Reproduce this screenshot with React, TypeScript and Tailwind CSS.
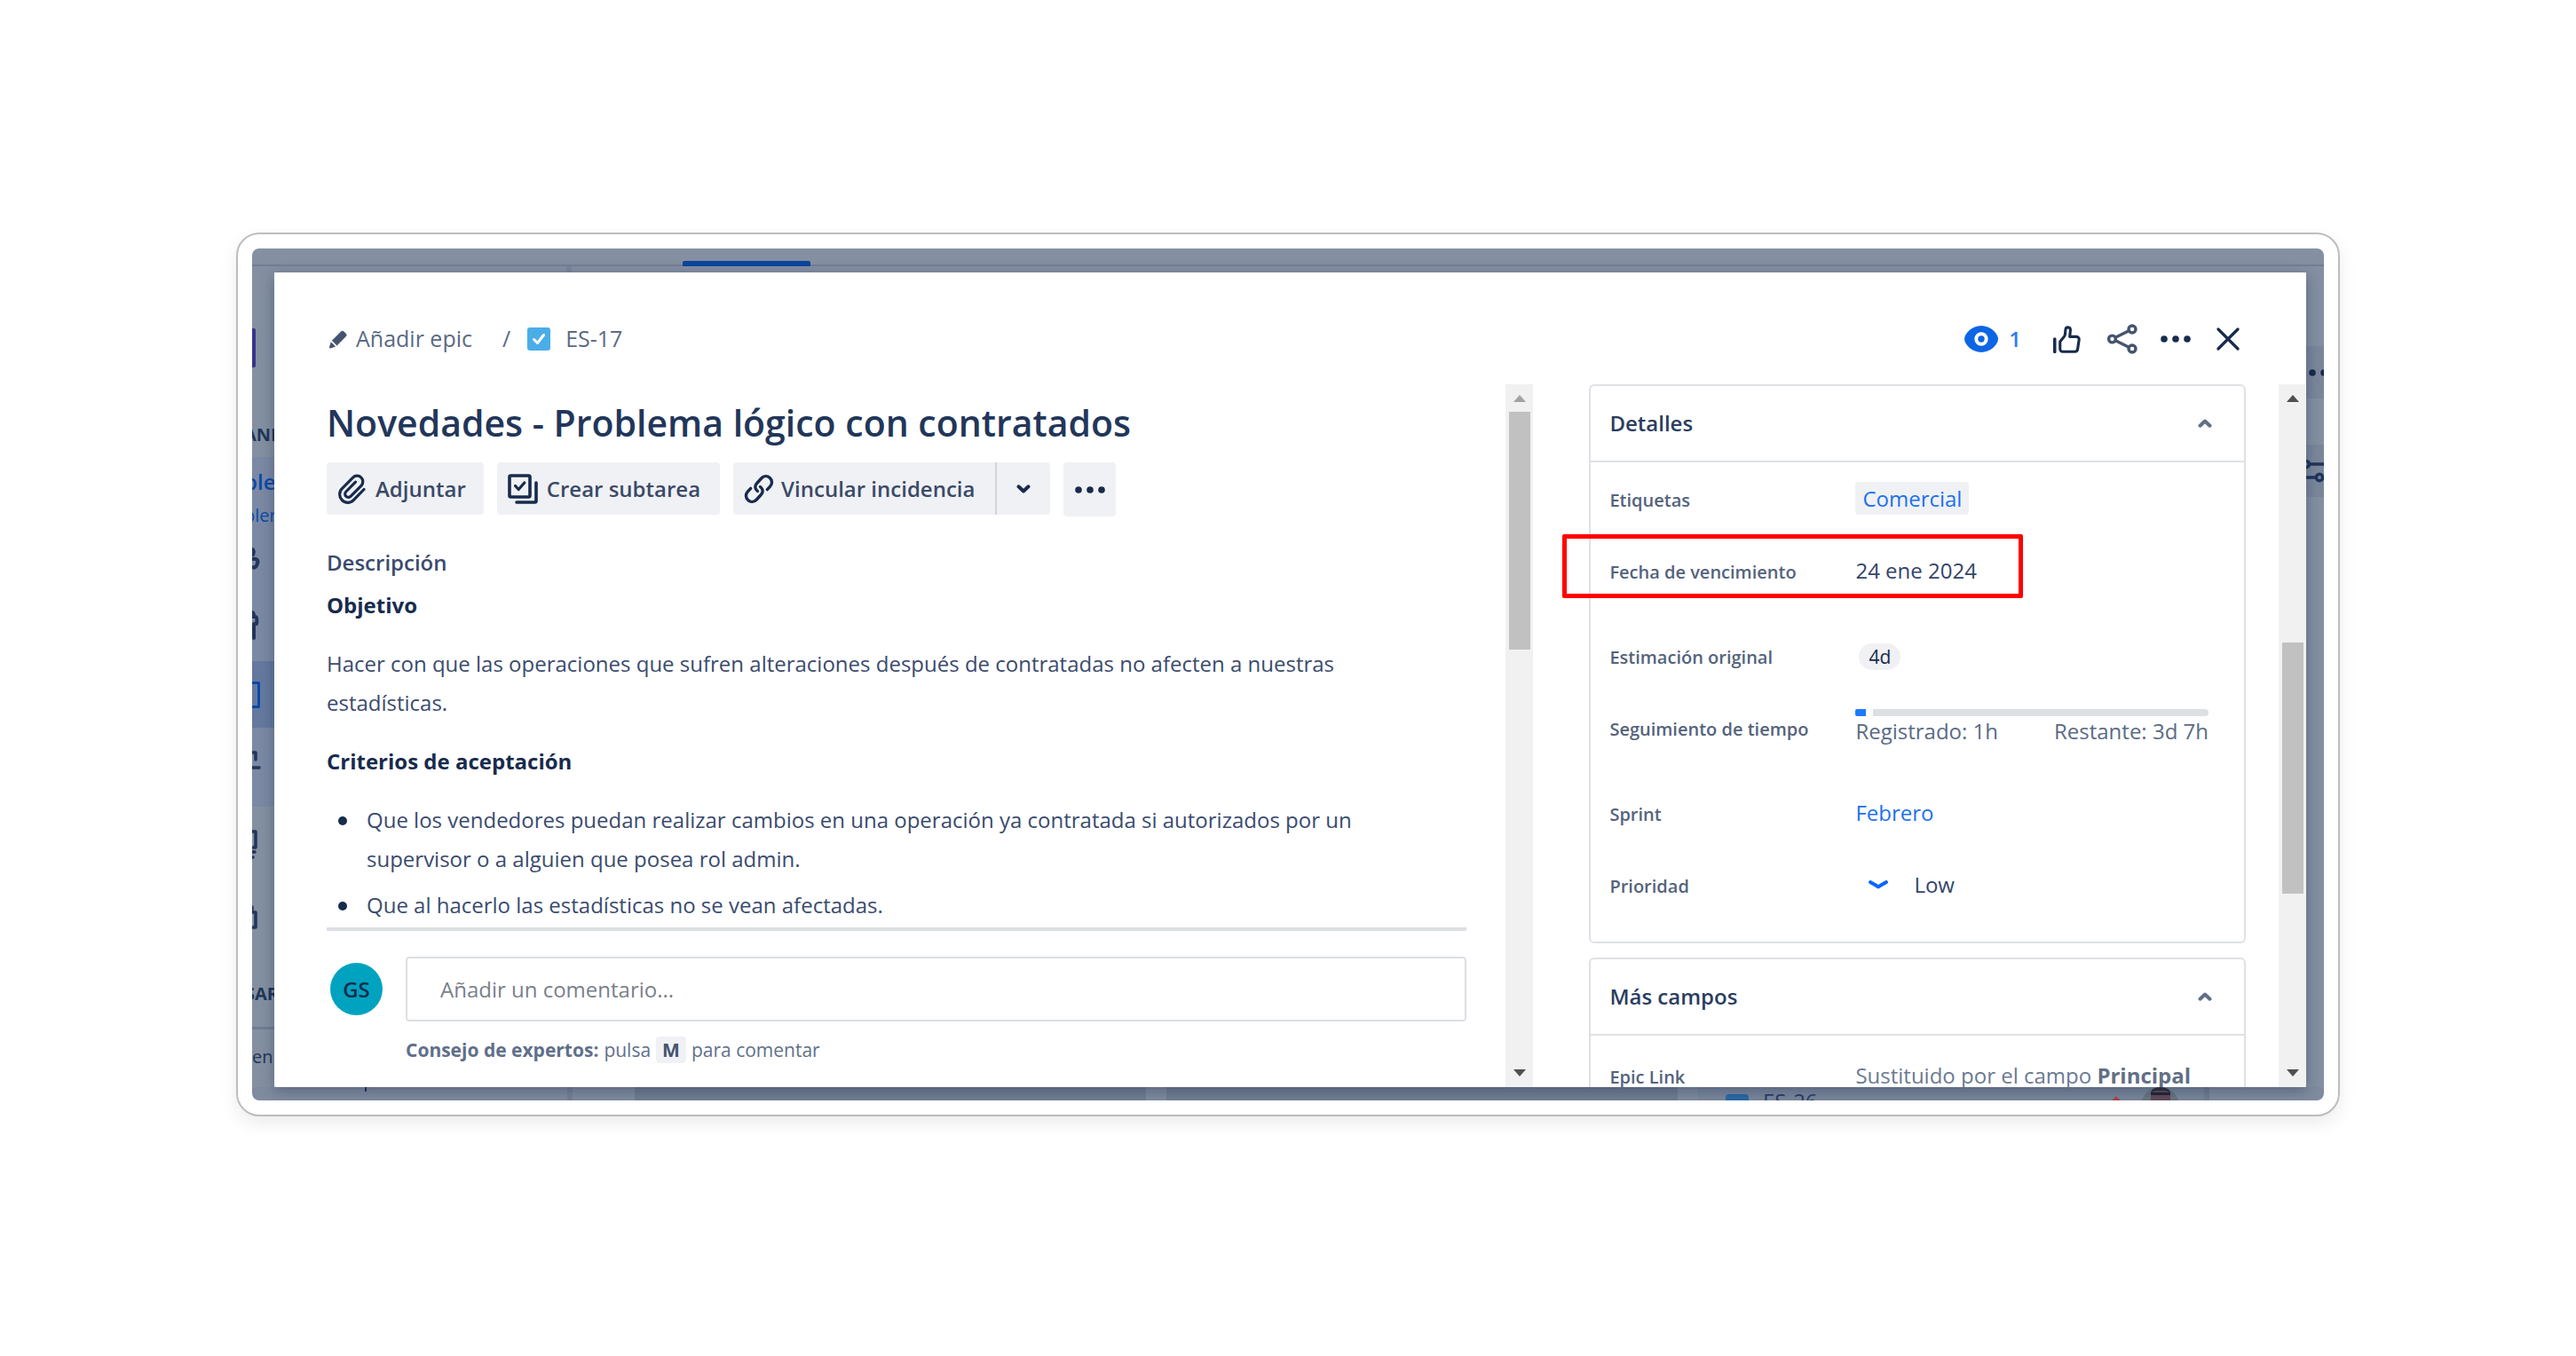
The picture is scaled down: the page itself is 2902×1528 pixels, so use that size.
import React from "react";

type IconProps = { className?: string };

const stroke = {
  fill: "none",
  stroke: "currentColor",
  strokeLinecap: "round" as const,
  strokeLinejoin: "round" as const,
};

const PencilIcon = ({ className }: IconProps) => (
  <svg viewBox="0 0 24 24" className={className} fill="currentColor" aria-hidden="true">
    <path d="M15.2 3.4a2.2 2.2 0 0 1 3.1 0l2.6 2.6a2.2 2.2 0 0 1 0 3.1L10.6 19.4l-5.700-5.700z" />
    <path d="M3.800 15.200l5.300 5.300-5.700 1.900a1 1 0 0 1-1.300-1.300z" />
  </svg>
);

const TaskIcon = ({ className }: IconProps) => (
  <svg viewBox="0 0 26 26" className={className} aria-hidden="true">
    <rect width="26" height="26" rx="3" fill="#4bade8" />
    <path d="M7.500 13.500l4 4 7-9" fill="none" stroke="#fff" strokeWidth="3" strokeLinecap="round" strokeLinejoin="round" />
  </svg>
);

const ClipIcon = ({ className }: IconProps) => (
  <svg viewBox="0 0 32 34" className={className} {...stroke} strokeWidth="3.200" aria-hidden="true">
    <path d="M30 17.500L18.200 29.600a9 9 0 0 1-13-.2 9 9 0 0 1 .1-12.700L17.600 4.100a6.500 6.500 0 0 1 9.300 9.200L15.200 25.200a3.700 3.700 0 0 1-5.400-5.200l10.700-10.900" />
  </svg>
);

const SubtaskIcon = ({ className }: IconProps) => (
  <svg viewBox="0 0 34 34" className={className} {...stroke} strokeWidth="3.600" aria-hidden="true">
    <rect x="2" y="2" width="23" height="24" rx="1.500" />
    <path d="M8.500 13.500l3.700 4 6.600-7.500" strokeWidth="3.200" />
    <path d="M32 10v20.500a1.500 1.500 0 0 1-1.500 1.500H10" />
  </svg>
);

const LinkIcon = ({ className }: IconProps) => (
  <svg viewBox="0 0 34 34" className={className} {...stroke} strokeWidth="3.400" aria-hidden="true">
    <path d="M15.500 19.500c-3.300-2.700-3.500-6.200-.8-9l5-5.500c2.700-2.900 6.800-3.200 9.600-.6s3 6.800.3 9.700l-3.300 3.500" />
    <path d="M18.500 14.500c3.300 2.700 3.500 6.200.8 9l-5 5.500c-2.700 2.900-6.800 3.200-9.600.6s-3-6.800-.3-9.700l3.300-3.500" />
  </svg>
);

const ChevronDown = ({ className }: IconProps) => (
  <svg viewBox="0 0 16 10" className={className} {...stroke} strokeWidth="4" aria-hidden="true">
    <path d="M2.500 2.300L8 7.500 13.500 2.300" />
  </svg>
);

const ChevronUp = ({ className }: IconProps) => (
  <svg viewBox="0 0 16 10" className={className} {...stroke} strokeWidth="4" aria-hidden="true">
    <path d="M2.500 7.700L8 2.500 13.500 7.700" />
  </svg>
);

const DotsIcon = ({ className }: IconProps) => (
  <svg viewBox="0 0 34 8" className={className} fill="currentColor" aria-hidden="true">
    <circle cx="4" cy="4" r="3.800" />
    <circle cx="17" cy="4" r="3.800" />
    <circle cx="30" cy="4" r="3.800" />
  </svg>
);

const EyeIcon = ({ className }: IconProps) => (
  <svg viewBox="0 0 38 30" className={className} aria-hidden="true">
    <path d="M19 0C9 0 0 8.500 0 15s9 15 19 15 19-8.500 19-15S29 0 19 0z" fill="#0c66e4" />
    <circle cx="19" cy="15" r="5.700" fill="#0c66e4" stroke="#fff" strokeWidth="4" />
  </svg>
);

const ThumbIcon = ({ className }: IconProps) => (
  <svg viewBox="0 0 30 30" className={className} {...stroke} strokeWidth="3" aria-hidden="true">
    <path d="M1.700 14.500v14" strokeWidth="3.400" />
    <path d="M7.500 17.500l4.600-5.800c.6-.8.800-1.600.900-2.500l.5-5c.2-1.700 1.300-2.500 2.700-2.400 1.500.1 2.600 1.200 2.600 2.900l-.7 7.300h7.200c2 0 3.200 1.500 2.900 3.400l-1.500 10c-.2 1.700-1.400 2.900-3.200 2.900H10.500c-1.700 0-3-1.300-3-3z" />
  </svg>
);

const ShareIcon = ({ className }: IconProps) => (
  <svg viewBox="0 0 34 34" className={className} {...stroke} strokeWidth="3.400" aria-hidden="true">
    <circle cx="5.500" cy="17" r="3.900" />
    <circle cx="28" cy="6" r="4" />
    <circle cx="28" cy="28" r="4" />
    <path d="M9.200 15.200L24.300 7.800M9.200 18.800l15.100 7.400" />
  </svg>
);

const CloseIcon = ({ className }: IconProps) => (
  <svg viewBox="0 0 26 26" className={className} {...stroke} strokeWidth="3.200" aria-hidden="true">
    <path d="M2 2l22 22M24 2L2 24" />
  </svg>
);

const Arrow = ({ up, className }: { up?: boolean; className?: string }) => (
  <svg viewBox="0 0 14 8" className={className} fill="currentColor" aria-hidden="true">
    <path d={up ? "M7 0l7 8H0z" : "M0 0h14L7 8z"} />
  </svg>
);

function Scrollbar({ before, thumb, after, upClass }: { before: string; thumb: string; after: string; upClass: string }) {
  return (
    <div className="flex w-[31px] shrink-0 flex-col items-center bg-[#f1f1f1] pt-[12px] pb-[12px]" aria-hidden="true">
      <Arrow up className={`h-2 w-[14px] shrink-0 ${upClass}`} />
      <div className="flex min-h-0 w-full flex-1 flex-col items-center py-[11px]">
        <div className={before} />
        <div className={`w-6 bg-[#c1c1c1] ${thumb}`} />
        <div className={after} />
      </div>
      <Arrow className="h-2 w-[14px] shrink-0 text-[#505050]" />
    </div>
  );
}

const actionButton = "flex h-[59px] items-center rounded bg-[#f0f1f4] font-semibold text-[#3a4a68]";

function Header() {
  return (
    <header className="flex h-[126px] shrink-0 items-center justify-between pt-6 pr-[75px] pl-[60px]">
      <nav aria-label="Ruta" className="flex items-center text-[25px] text-[#5a6a85]">
        <button type="button" className="flex items-center gap-2">
          <PencilIcon className="size-6 text-[#44546f]" />
          Añadir epic
        </button>
        <span className="ml-[34px]">/</span>
        <a href="#es-17" className="ml-[19px] flex items-center gap-[17px]">
          <TaskIcon className="size-[26px]" />
          ES-17
        </a>
      </nav>
      <div className="flex items-center text-[#172b4d]">
        <button type="button" aria-label="Observadores" className="flex items-center gap-3 text-2xl font-semibold text-[#2f7bf0]">
          <EyeIcon className="h-[30px] w-[38px]" />1
        </button>
        <button type="button" aria-label="Votar" className="ml-9">
          <ThumbIcon className="size-[31px]" />
        </button>
        <button type="button" aria-label="Compartir" className="ml-[30px] text-[#44546f]">
          <ShareIcon className="size-[34px]" />
        </button>
        <button type="button" aria-label="Acciones" className="ml-[26px]">
          <DotsIcon className="h-2 w-[34px]" />
        </button>
        <button type="button" aria-label="Cerrar" className="ml-[29px]">
          <CloseIcon className="size-[26px]" />
        </button>
      </div>
    </header>
  );
}

function Bullet({ children }: { children: React.ReactNode }) {
  return (
    <li className="flex gap-[22px]">
      <span className="mt-[18px] size-[10px] shrink-0 rounded-full bg-[#172b4d]" />
      <p>{children}</p>
    </li>
  );
}

function Issue() {
  return (
    <section className="flex min-w-0 flex-1 flex-col pr-11 pl-[59px]">
      <div className="min-h-0 flex-1 overflow-hidden text-2xl leading-[44px] text-[#3a4b6e]">
        <h1 className="text-[41px] leading-[86px] font-semibold text-[#22365a]">
          Novedades - Problema lógico con contratados
        </h1>
        <div className="mt-[2px] flex items-start gap-[15px]">
          <button type="button" className={`${actionButton} gap-[11px] pr-5 pl-3`}>
            <ClipIcon className="h-[34px] w-8 text-[#172b4d]" />
            Adjuntar
          </button>
          <button type="button" className={`${actionButton} gap-[10px] pr-[22px] pl-3`}>
            <SubtaskIcon className="size-[34px] text-[#172b4d]" />
            Crear subtarea
          </button>
          <div className="flex">
            <button type="button" className={`${actionButton} gap-2 rounded-r-none pr-[23px] pl-3`}>
              <LinkIcon className="size-[34px] text-[#172b4d]" />
              Vincular incidencia
            </button>
            <button
              type="button"
              aria-label="Más opciones de vínculo"
              className={`${actionButton} w-[62px] justify-center rounded-l-none border-l-2 border-[#d0d3da]`}
            >
              <ChevronDown className="h-[10px] w-4 text-[#172b4d]" />
            </button>
          </div>
          <button type="button" aria-label="Más acciones" className="flex h-[61px] w-[59px] items-center justify-center rounded bg-[#f0f1f4] text-[#172b4d]">
            <DotsIcon className="h-2 w-[34px]" />
          </button>
        </div>
        <h2 className="mt-[30px] font-semibold">Descripción</h2>
        <h3 className="mt-1 font-bold text-[#172b4d]">Objetivo</h3>
        <p className="mt-[22px] pr-12">
          Hacer con que las operaciones que sufren alteraciones después de contratadas no afecten a nuestras estadísticas.
        </p>
        <h3 className="mt-[22px] font-bold text-[#172b4d]">Criterios de aceptación</h3>
        <ul className="mt-[22px] space-y-2 pr-10 pl-[13px]">
          <Bullet>
            Que los vendedores puedan realizar cambios en una operación ya contratada si autorizados por un supervisor o a
            alguien que posea rol admin.
          </Bullet>
          <Bullet>Que al hacerlo las estadísticas no se vean afectadas.</Bullet>
        </ul>
      </div>
      <div className="grid h-[180px] shrink-0 grid-cols-[89px_1fr] content-start border-t-4 border-[#dcdfe4] pt-[29px]">
        <div className="flex items-center pl-1">
          <span className="flex size-[59px] items-center justify-center rounded-full bg-[#00a3bf] text-2xl font-semibold text-[#172b4d]">
            GS
          </span>
        </div>
        <input
          type="text"
          aria-label="Añadir un comentario"
          placeholder="Añadir un comentario..."
          className="h-[73px] w-full rounded border-2 border-[#dcdfe4] px-[37px] text-2xl text-[#172b4d] placeholder:text-[#7a7f8c]"
        />
        <p className="col-start-2 mt-[15px] flex items-center text-[21px] leading-[34px] text-[#5f6f8a]">
          <strong className="font-bold">Consejo de expertos:</strong>
          <span className="ml-[6px]">pulsa</span>
          <kbd className="mx-[6px] flex h-[30px] items-center rounded bg-[#f0f1f4] px-[7px] text-[21px] font-bold text-[#44546f] [font-family:inherit]">
            M
          </kbd>
          para comentar
        </p>
      </div>
    </section>
  );
}

function Field({ label, className = "", children }: { label: string; className?: string; children: React.ReactNode }) {
  return (
    <div className={`grid h-[81px] grid-cols-[277px_1fr] items-center ${className}`}>
      <dt className="pt-1 text-[20px] font-semibold text-[#54637c]">{label}</dt>
      <dd className="text-2xl text-[#33456a]">{children}</dd>
    </div>
  );
}

function Card({ title, className = "", children }: { title: string; className?: string; children: React.ReactNode }) {
  return (
    <div className={`rounded-md border-2 border-[#dfe1e6] ${className}`}>
      <h2>
        <button
          type="button"
          aria-expanded="true"
          className="flex h-[86px] w-full items-center justify-between border-b-2 border-[#dfe1e6] pr-9 pl-[21px] text-2xl font-semibold text-[#2a3d60]"
        >
          {title}
          <ChevronUp className="h-[10px] w-4 text-[#626f86]" />
        </button>
      </h2>
      {children}
    </div>
  );
}

function Details() {
  return (
    <aside className="w-[36.680%] shrink-0 overflow-hidden pr-[37px] pl-[63px]">
      <Card title="Detalles" className="pb-6">
        <dl className="pr-10 pl-[21px]">
          <Field label="Etiquetas">
            <a href="#comercial" className="inline-block rounded bg-[#f0f1f4] px-2 leading-[37px] text-[#1d70ee]">
              Comercial
            </a>
          </Field>
          <Field label="Fecha de vencimiento" className="relative">
            24 ene 2024
            <span className="absolute top-0 left-[-53px] h-[72px] w-[519px] rounded-xs border-[5px] border-[#ff0000]" />
          </Field>
          <Field label="Estimación original" className="mt-[15px]">
            <span className="ml-1 inline-block rounded-2xl bg-[#f0f1f4] px-[11px] align-middle text-[21px] leading-[30px] text-[#172b4d]">4d</span>
          </Field>
          <Field label="Seguimiento de tiempo">
            <div className="flex h-2 gap-2">
              <div className="w-3 rounded-l-xs bg-[#1d7afc]" />
              <div className="flex-1 rounded-r-sm bg-[#dcdfe4]" />
            </div>
            <div className="flex justify-between leading-[34px] text-[#5a6a85]">
              <span>Registrado: 1h</span>
              <span>Restante: 3d 7h</span>
            </div>
          </Field>
          <Field label="Sprint" className="mt-[15px]">
            <a href="#febrero" className="text-[#1d70ee]">
              Febrero
            </a>
          </Field>
          <Field label="Prioridad">
            <span className="flex items-center gap-7 pl-[14px]">
              <svg viewBox="0 0 24 12" className="h-3 w-6" {...stroke} strokeWidth="4" aria-hidden="true">
                <path d="M3 3c3 2 6 3.300 9 5.500C15 6.300 18 5 21 3" stroke="#0c66ff" />
              </svg>
              Low
            </span>
          </Field>
        </dl>
      </Card>
      <Card title="Más campos" className="mt-4">
        <dl className="pt-1 pr-10 pl-[21px]">
          <Field label="Epic Link">
            <span className="text-[#6b7a93]">
              Sustituido por el campo <strong className="font-bold text-[#626f86]">Principal</strong>
            </span>
          </Field>
        </dl>
      </Card>
    </aside>
  );
}

const navRow = "flex h-[75px] items-center";

/* Sliver of the project sidebar that stays visible beside the dialog. */
function SidebarEdge() {
  return (
    <div className="flex flex-col overflow-hidden bg-[#8490a1] text-[#22355a]">
      <div className="mt-[63px] h-11 w-1 shrink-0 rounded-r-xs bg-[#37348a]" />
      <div className="mt-[51px] flex h-[50px] shrink-0 items-center text-[20px] font-bold">
        <span className="-ml-[9px]">ANI</span>
      </div>
      <div className="shrink-0 bg-[#7b89a4] pt-2 text-[#0b4aa6]">
        <div className="flex h-10 items-center text-2xl font-semibold">
          <span className="-ml-[9px]">ble</span>
        </div>
        <div className="flex h-9 items-center text-[20px]">
          <span className="-ml-[9px]">bler</span>
        </div>
        <div className={`${navRow} -mt-2 text-[#22355a]`}>
          <svg viewBox="0 0 12 30" className="h-[30px] w-3" {...stroke} strokeWidth="4">
            <path d="M0 5q3 1 1 6M0 16q8-1 6 5t-6 4" />
          </svg>
        </div>
        <div className={`${navRow} text-[#22355a]`}>
          <svg viewBox="0 0 12 34" className="h-[34px] w-3" {...stroke} strokeWidth="4">
            <path d="M0 3q3 1 1 5h3q2 1 1 8H2v16" />
          </svg>
        </div>
        <div className={`${navRow} mt-1 bg-[#65799f]`}>
          <div className="h-[30px] w-[9px] rounded-r-xs border-3 border-l-0 border-[#0b4aa6]" />
        </div>
        <div className={`${navRow} mb-[14px] text-[#22355a]`}>
          <svg viewBox="0 0 12 30" className="h-[30px] w-3" {...stroke} strokeWidth="3.500">
            <path d="M0 5h4v8M0 22h8" />
          </svg>
        </div>
      </div>
      <div className={`${navRow} mt-1 shrink-0`}>
        <svg viewBox="0 0 12 34" className="h-[34px] w-3" {...stroke} strokeWidth="3.500">
          <path d="M0 3h4v18H1M0 26h3M0 32h1" />
        </svg>
      </div>
      <div className={`${navRow} mt-2 shrink-0`}>
        <svg viewBox="0 0 12 30" className="h-[30px] w-3" {...stroke} strokeWidth="3.500">
          <path d="M0 3v6h4v17H0" />
        </svg>
      </div>
      <div className="mt-6 flex h-[50px] shrink-0 items-center text-[20px] font-bold">
        <span className="-ml-2">SAR</span>
      </div>
      <div className="mt-3 h-[3px] shrink-0 bg-[#6f7d94]" />
      <div className="flex h-[62px] shrink-0 items-center text-[20px]">en</div>
    </div>
  );
}

/* Top of the board page: header line and the selected tab. */
function TopEdge() {
  return (
    <div className="h-[27px] shrink-0 bg-[#8490a1]">
      <div className="flex h-5 items-end border-b-2 border-[#727e93] pl-[485px]">
        <div className="-mb-[2px] h-[6px] w-36 rounded-t-xs bg-[#0b459c]" />
      </div>
      <div className="flex h-[7px] bg-[#858fa3] pl-[354px]">
        <div className="w-[6px] bg-[#7b869b]" />
      </div>
    </div>
  );
}

function RightEdge() {
  return (
    <div className="overflow-hidden bg-[#8490a1] text-[#172b4d]">
      <div className="mt-[83px] flex h-[59px] items-center bg-[#7a879b] pl-[3px]">
        <DotsIcon className="h-2 w-[34px] shrink-0" />
      </div>
      <div className="mt-[52px] flex h-[59px] items-center bg-[#7a879b] text-[#22355a]">
        <svg viewBox="0 0 20 28" className="h-7 w-5" {...stroke} strokeWidth="3.500">
          <circle cx="0" cy="6" r="3.500" />
          <path d="M4 6h18M0 21h10" />
          <circle cx="15" cy="21" r="3.700" />
        </svg>
      </div>
    </div>
  );
}

/* Bottom of the board: three columns, the last with the top of a card. */
function BottomEdge() {
  return (
    <div className="flex h-[15px] shrink-0 overflow-hidden bg-[#7f8b9e]">
      <div className="w-[15.200%] pl-[127px]">
        <div className="h-[5px] w-[2px] bg-[#22355a]" />
      </div>
      <div className="w-[6px] bg-[#758197]" />
      <div className="grid flex-1 grid-cols-3 gap-[23px] pr-[129px] pl-[70px]">
        <div className="bg-[#717e92]" />
        <div className="bg-[#717e92]" />
        <div className="flex border-r-[6px] border-[#717e92] bg-[#7a869b] pl-[31px]">
          <div className="mt-2 size-[26px] shrink-0 rounded-sm bg-[#2a6aa3]" />
          <span className="mt-1 ml-4 text-2xl leading-6 text-[#2c3c66]">ES-26</span>
          <div className="mt-3 ml-auto size-2 shrink-0 rotate-45 bg-[#a3423f]" />
          <div className="mr-7 ml-6 flex size-[43px] shrink-0 justify-center overflow-hidden rounded-full bg-[#697580]">
            <div className="h-10 w-[22px] rounded-t-lg border-t-4 border-[#33303c] bg-[#624a55]">
              <div className="mt-[2px] h-[3px] bg-[#27243a]" />
            </div>
          </div>
        </div>
      </div>
    </div>
  );
}

export default function App() {
  return (
    <main className="flex h-screen flex-col bg-white px-[266px] pt-[262px] pb-[270px] font-['Open_Sans','Noto_Sans',sans-serif]">
      <div className="flex min-h-0 flex-1 rounded-[26px] border-2 border-[#bdbdbd] p-4 shadow-[0_8px_20px_rgba(0,0,0,0.08)]">
        <div className="flex min-w-0 flex-1 flex-col overflow-hidden rounded-lg">
          <TopEdge />
          <div className="grid min-h-0 flex-1 grid-cols-[25px_1fr_20px] grid-rows-[minmax(0,1fr)]">
            <SidebarEdge />
            <div
              role="dialog"
              aria-label="Novedades - Problema lógico con contratados"
              className="relative flex min-h-0 min-w-0 flex-col overflow-hidden rounded bg-white shadow-[0_4px_16px_rgba(9,30,66,0.35)]"
            >
              <Header />
              <div className="flex min-h-0 flex-1">
                <Issue />
                <Scrollbar before="" thumb="h-[268px]" after="flex-1" upClass="text-[#a3a3a3]" />
                <Details />
                <Scrollbar before="flex-[262]" thumb="h-[283px]" after="flex-[188]" upClass="text-[#505050]" />
              </div>
            </div>
            <RightEdge />
          </div>
          <BottomEdge />
        </div>
      </div>
    </main>
  );
}
